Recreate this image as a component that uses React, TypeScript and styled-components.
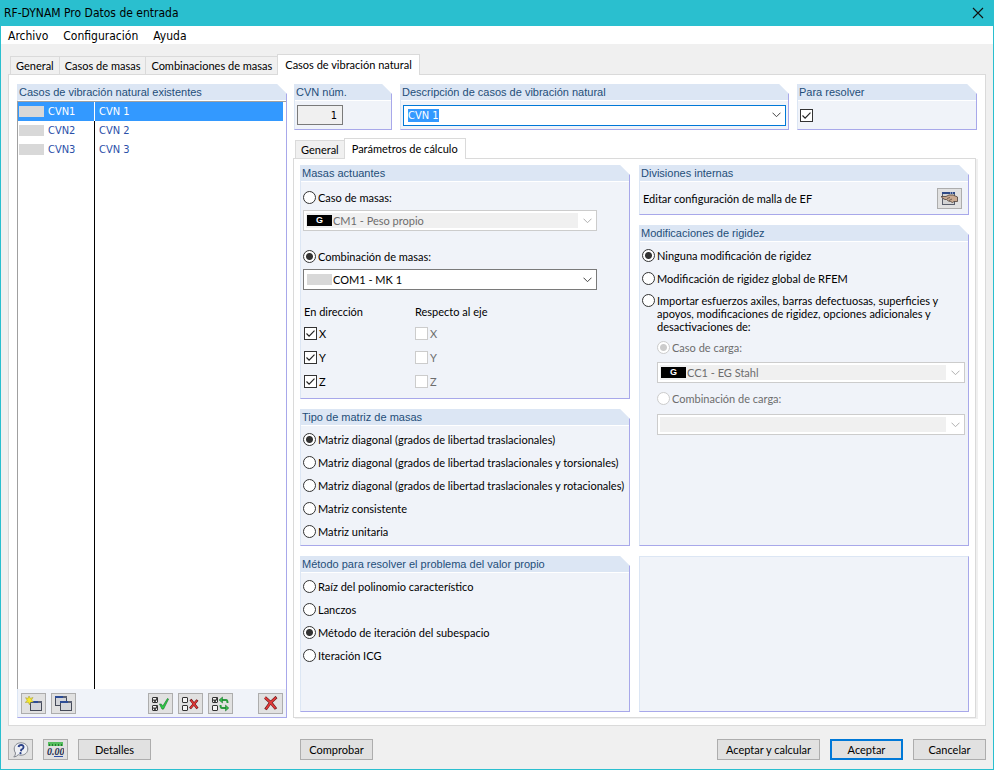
import React, { useEffect, useRef } from 'react';
import styled, { createGlobalStyle, css } from 'styled-components';

const ui = '"Lato", "Noto Sans", sans-serif';
const caption = '"DejaVu Sans Condensed", "DejaVu Sans", sans-serif';
const heading = '"Liberation Sans", Arial, sans-serif';

const c = {
  teal: '#2abfcf',
  face: '#f0f0f0',
  edge: '#dadada',
  panel: '#f0f3f9',
  head: '#dce6f4',
  headText: '#1f4e79',
  lilac: '#a8a8ea',
  select: '#3399ff',
  focus: '#0078d7',
  muted: '#6d6d6d',
  link: '#2b50a8',
};

const GlobalStyle = createGlobalStyle`
  *, *::before, *::after { box-sizing: border-box; }
  body { margin: 0; background: ${c.face}; color: #000; font: 11px/13px ${ui}; }
  button, input, select { font: inherit; color: inherit; margin: 0; }
  h1, h2 { margin: 0; font-weight: normal; }
  ::selection { background: ${c.select}; color: #fff; }
`;

const Window = styled.div`
  display: flex;
  flex-direction: column;
  min-height: 100vh;
  border: 1px solid ${c.teal};
  border-top: 0;
  background: ${c.face};
`;

const TitleBar = styled.header`
  display: flex;
  align-items: center;
  justify-content: space-between;
  height: 26px;
  padding: 0 7px 0 3px;
  background: ${c.teal};
`;

const Title = styled.h1`
  font: 12px/16px ${caption};
`;

const CloseButton = styled.button`
  display: flex;
  padding: 2px;
  border: 0;
  background: none;
`;

const MenuBar = styled.nav`
  display: flex;
  align-items: flex-end;
  gap: 15px;
  height: 18px;
  padding: 0 7px;
  background: #fff;
`;

const MenuItem = styled.button`
  padding: 0;
  border: 0;
  background: none;
  font: 12px/16px ${caption};
`;

const Content = styled.main`
  flex: 1;
  display: flex;
  flex-direction: column;
  padding: 10px 7px 0;
`;

const TabList = styled.div<{ $inset?: number }>`
  display: flex;
  align-items: flex-end;
  height: 20px;
  padding-left: ${(p) => p.$inset ?? 2}px;
`;

const Tab = styled.button<{ $active?: boolean }>`
  height: 18px;
  padding: 0 5px;
  border: 1px solid ${c.edge};
  border-right-width: 0;
  border-bottom-width: 0;
  background: ${c.face};
  white-space: nowrap;
  ${(p) =>
    p.$active &&
    css`
      z-index: 1;
      height: 21px;
      padding: 0 7px 2px;
      margin-bottom: -1px;
      border-right-width: 1px;
      background: #fff;
    `}
`;

const Page = styled.div`
  flex: 1;
  display: grid;
  grid-template-columns: 270px minmax(0, 1fr);
  gap: 6px;
  padding: 9px 8px 7px;
  border: 1px solid ${c.edge};
  background: #fff;
`;

const Group = styled.section<{ $grow?: boolean; $plain?: boolean }>`
  display: flex;
  flex-direction: column;
  min-width: 0;
  border: 1px solid ${c.lilac};
  border-left-color: ${c.head};
  border-top: ${(p) => (p.$plain ? `1px solid ${c.head}` : '0')};
  background: ${c.panel};
  clip-path: ${(p) =>
    p.$plain ? 'none' : 'polygon(0 0, calc(100% - 10px) 0, 100% 10px, 100% 100%, 0 100%)'};
  ${(p) => p.$grow && 'flex: 1;'}
`;

const GroupTitle = styled.h2`
  height: 17px;
  padding: 0 1px;
  border-bottom: 1px solid #fff;
  background: ${c.head};
  color: ${c.headText};
  font: 11px/16px ${heading};
  white-space: nowrap;
`;

const CaseList = styled.div`
  flex: 1;
  margin-left: -1px;
  padding-right: 3px;
  border-top: 1px solid #a0a0a0;
  border-left: 1px solid #a0a0a0;
  background: linear-gradient(#000, #000) 76px 0 / 1px 100% no-repeat #fff;
`;

const CaseTable = styled.table`
  width: 100%;
  border-spacing: 0;
  color: ${c.link};
`;

const CaseRow = styled.tr<{ $selected?: boolean }>`
  height: 19px;
  ${(p) => p.$selected && `background: ${c.select}; color: #fff;`}
`;

const CaseCode = styled.td<{ $selected?: boolean }>`
  width: 77px;
  padding: 0 1px;
  border-right: 1px solid ${(p) => (p.$selected ? '#fff' : '#000')};
`;

const CaseLabel = styled.span`
  display: flex;
  align-items: center;
  gap: 4px;
  font: 11px/13px ${caption};
`;

const CaseName = styled.td`
  padding: 0 4px;
  font: 11px/13px ${caption};
`;

const Swatch = styled.span<{ $dark?: boolean }>`
  flex: none;
  width: 25px;
  height: 11px;
  background: ${(p) => (p.$dark ? '#000' : '#d8d8d8')};
  color: #fff;
  font: bold 9px/11px ${heading};
  text-align: center;
`;

const ListTools = styled.div`
  display: flex;
  gap: 5px;
  padding: 4px 3px 3px;
`;

const Spacer = styled.span<{ $w?: number }>`
  flex: ${(p) => (p.$w ? `0 0 ${p.$w}px` : '1')};
`;

const IconButton = styled.button`
  display: flex;
  align-items: center;
  justify-content: center;
  width: 25px;
  height: 21px;
  padding: 0;
  border: 1px solid #adadad;
  background: #e1e1e1;
`;

const Details = styled.div`
  display: flex;
  flex-direction: column;
  min-width: 0;
`;

const CaseHeader = styled.div`
  display: grid;
  grid-template-columns: 98px minmax(0, 1fr) 180px;
  gap: 8px;
  margin: 0 0 8px 1px;
`;

const HeaderBody = styled.div`
  display: flex;
  align-items: center;
  height: 28px;
  padding: 0 2px;
`;

const NumberBox = styled.input`
  width: 46px;
  height: 20px;
  padding: 0 5px;
  border: 1px solid #7a7a7a;
  background: ${c.face};
  font: 11px/13px ${caption};
  text-align: right;
`;

const NameCombo = styled.div`
  flex: 1;
  display: flex;
  height: 21px;
  border: 1px solid ${c.focus};
  background: #fff;
`;

const NameInput = styled.input`
  flex: 1;
  min-width: 0;
  padding: 0 4px;
  border: 0;
  outline: 0;
  background: none;
  font: 11px/13px ${caption};
`;

const DropButton = styled.button`
  display: flex;
  align-items: center;
  justify-content: center;
  width: 17px;
  padding: 0;
  border: 0;
  background: none;
`;

const SubPage = styled.div`
  flex: 1;
  display: grid;
  grid-template-columns: minmax(0, 1fr) minmax(0, 1fr);
  gap: 9px;
  margin-right: 1px;
  padding: 6px 6px 5px;
  border: 1px solid ${c.edge};
  box-shadow: 2px 1px 0 ${c.face};
  background: #fff;
`;

const Column = styled.div`
  display: flex;
  flex-direction: column;
  gap: 10px;
  min-width: 0;
`;

const GroupBody = styled.div`
  display: flex;
  flex-direction: column;
  padding: 2px;
`;

const BottomSlot = styled.div`
  display: flex;
  flex: 1 0 156px;
`;

const FixedSlot = styled.div`
  display: flex;
  flex: 0 0 156px;
`;

const Option = styled.label<{ $disabled?: boolean; $top?: boolean; $tall?: number }>`
  display: flex;
  align-items: ${(p) => (p.$top ? 'flex-start' : 'center')};
  gap: 2px;
  min-height: ${(p) => p.$tall ?? 23}px;
  padding-top: ${(p) => (p.$top ? 4 : 0)}px;
  white-space: ${(p) => (p.$top ? 'normal' : 'nowrap')};
  ${(p) => p.$disabled && `color: ${c.muted};`}
`;

const Radio = styled.input.attrs({ type: 'radio' })`
  appearance: none;
  flex: none;
  width: 13px;
  height: 13px;
  border: 1px solid #333;
  border-radius: 50%;
  background: #fff;
  &:checked { background: radial-gradient(circle, #333 0 3px, #fff 4px); }
  &:disabled { border-color: #ccc; }
  &:disabled:checked { background: radial-gradient(circle, #ccc 0 3px, #fff 4px); }
`;

const CheckBox = styled.input.attrs({ type: 'checkbox' })`
  appearance: none;
  flex: none;
  width: 13px;
  height: 13px;
  border: 1px solid #333;
  background: #fff;
  &:disabled { border-color: #ccc; }
`;

const CheckFrame = styled.span`
  display: grid;
  > * { grid-area: 1 / 1; }
  > svg { pointer-events: none; }
`;

const SelectFrame = styled.div<{ $wide?: boolean; $disabled?: boolean }>`
  display: grid;
  grid-template-columns: 1fr 17px;
  align-items: center;
  height: 21px;
  margin: ${(p) => (p.$wide ? '2px 0' : '2px 30px 14px 0')};
  border: 1px solid ${(p) => (p.$disabled ? '#ccc' : '#7a7a7a')};
  background: #fff;
  color: ${(p) => (p.$disabled ? c.muted : '#000')};
  > * { grid-row: 1; }
  > svg { grid-column: 2; pointer-events: none; justify-self: center; }
  > span { grid-column: 1; margin-left: 3px; pointer-events: none; z-index: 1; }
`;

const Select = styled.select`
  appearance: none;
  grid-column: 1 / -1;
  width: 100%;
  height: 19px;
  padding: 0 17px 0 29px;
  border: 0;
  background: none;
  opacity: 1;
  &:disabled {
    background: linear-gradient(${c.face}, ${c.face}) 2px 2px / calc(100% - 20px) 15px no-repeat;
    color: ${c.muted};
  }
`;

const Axes = styled.div`
  display: grid;
  grid-template-columns: 111px 1fr;
  padding-left: 1px;
`;

const AxisTitle = styled.span`
  line-height: 16px;
  padding-bottom: 1px;
`;

const MasasBody = styled(GroupBody)`
  padding: 4px 2px 5px;
`;

const MeshRow = styled.div`
  display: flex;
  align-items: center;
  justify-content: space-between;
  height: 32px;
  padding: 0 6px 0 3px;
`;

const Nested = styled.div`
  padding: 2px 1px 0 15px;
`;

const Footer = styled.footer`
  display: flex;
  align-items: center;
  gap: 10px;
  padding: 13px 7px 9px;
`;

const PushButton = styled.button<{ $default?: boolean; $w?: number }>`
  min-width: ${(p) => p.$w ?? 73}px;
  height: 21px;
  padding: 0 7px;
  border: ${(p) => (p.$default ? `2px solid ${c.focus}` : '1px solid #adadad')};
  background: #e1e1e1;
  white-space: nowrap;
`;

const Chevron = ({ dim }: { dim?: boolean }) => (
  <svg width="9" height="6" viewBox="0 0 9 6" fill="none" stroke={dim ? '#b0b0b0' : '#444'}>
    <path d="M.5 .7l4 4 4-4" />
  </svg>
);

const Tick = () => (
  <svg width="13" height="13" viewBox="0 0 13 13" fill="none" stroke="#222" strokeWidth="1.2">
    <path d="M2.5 6.5l2.6 2.7 5.4-5.6" />
  </svg>
);

const MiniWindow = ({ x, y }: { x: number; y: number }) => (
  <g transform={`translate(${x} ${y})`}>
    <rect x=".5" y=".5" width="11" height="9" fill="#d3d5da" stroke="#454a58" />
    <rect x="0" y="0" width="8" height="2" fill="#2c4c96" />
    <rect x="8" y="0" width="4" height="2" fill="#5c6274" />
  </g>
);

const NewIcon = () => (
  <svg width="17" height="16" viewBox="0 0 17 16">
    <MiniWindow x={5} y={5} />
    <path
      d="M4 0l1.200 2.400L8 1.500 6.400 4 8.500 6 5.600 6 4.500 8.800 3.300 6.200.3 6.500 2.200 4.300.6 1.700l2.500.7z"
      fill="#f7ea2c"
      stroke="#a39722"
      strokeWidth=".5"
    />
  </svg>
);

const CopyIcon = () => (
  <svg width="17" height="16" viewBox="0 0 17 16">
    <MiniWindow x={0} y={0} />
    <MiniWindow x={5} y={5} />
  </svg>
);

const Boxes = ({ a, b }: { a?: boolean; b?: boolean }) => (
  <g fill="#f4f4f4" stroke="#333">
    <rect x=".5" y="1.5" width="5" height="5" rx=".5" />
    <rect x=".5" y="9.5" width="5" height="5" rx=".5" />
    {a && <path d="M1.5 3.5l1.5 2 2.5-4" fill="none" strokeWidth="1.3" />}
    {b && <path d="M1.5 11.5l1.5 2 2.5-4" fill="none" strokeWidth="1.3" />}
  </g>
);

const AllIcon = () => (
  <svg width="17" height="16" viewBox="0 0 17 16">
    <Boxes a b />
    <path d="M7.500 8l2 .2 1.200 2L15.500 2.500l1 .6-5 10h-1.500z" fill="#2fd048" stroke="#157a28" strokeWidth=".7" />
  </svg>
);

const NoneIcon = () => (
  <svg width="17" height="16" viewBox="0 0 17 16">
    <Boxes />
    <path d="M8.5 3.500l7 9M15.500 4l-7.500 8.500" stroke="#6c1515" strokeWidth="2.6" />
    <path d="M9 4.200l6 7.800M15 4.500l-6.500 7.500" stroke="#e03838" strokeWidth="1.4" />
  </svg>
);

const InvertIcon = () => (
  <svg width="17" height="16" viewBox="0 0 17 16">
    <Boxes a />
    <g fill="none" stroke="#2c9a40" strokeWidth="2">
      <path d="M8.5 4H14q1.500 0 1.500 3" />
      <path d="M15.500 12H10q-1.500 0-1.500-3" />
    </g>
    <path d="M10.500 1v6L7 4zM13.500 9v6l3.300-3z" fill="#35b84c" stroke="#166b27" strokeWidth=".5" />
  </svg>
);

const DeleteIcon = () => (
  <svg width="15" height="15" viewBox="0 0 15 15">
    <path d="M2 1.500Q8 6 13 13M13.500 1Q7 6 2.500 13.500" fill="none" stroke="#6a1c1c" strokeWidth="2.900" />
    <path d="M2 1.500Q8 6 12.500 12.500M13 1.500Q7 6 3 13" fill="none" stroke="#e23a3a" strokeWidth="1.700" />
  </svg>
);

const MeshIcon = () => (
  <svg width="17" height="15" viewBox="0 0 17 15">
    <rect x="1.5" y="1.5" width="12" height="12" fill="#d4d4d4" stroke="#5a5f6c" />
    <path d="M1 2h13" stroke="#2f4a86" strokeWidth="2" />
    <path d="M9 2h1M11 2h1" stroke="#dfe6f5" />
    <path
      d="M0 5.5h5L8 4h4l4.500 2v4.500H13l-1.500 1-2-1-2-.5-2-1.500H4L2 7.500z"
      fill="#c9a990"
      stroke="#4c4038"
      strokeWidth=".8"
    />
    <path d="M6 7.500l3-1M8 9.500l3-1.500" stroke="#4c4038" strokeWidth=".7" />
  </svg>
);

const HelpIcon = () => (
  <svg width="17" height="16" viewBox="0 0 17 16">
    <path
      d="M8.500 1a6.500 6 0 1 1-3 0M5.500 13Q4.500 14.800 2 15q1.500-1.500 1.200-3.500"
      fill="none"
      stroke="none"
    />
    <path
      d="M9 .8C13 .8 15.800 3.500 15.800 7S13 13.200 9 13.200q-1.500 0-2.800-.5Q4.500 14.800 1.800 15q1.800-1.700 1.700-4Q2.200 9.200 2.200 7C2.200 3.500 5 .8 9 .8z"
      fill="#eef0f4"
      stroke="#82868e"
    />
    <path d="M6.500 5q.5-2 2.800-2t2.200 2.200Q11.400 7 9.400 7.600L8.900 9.200" fill="none" stroke="#2b4188" strokeWidth="1.900" />
    <circle cx="8.500" cy="11.200" r="1.100" fill="#2b4188" />
  </svg>
);

const UnitsIcon = () => (
  <svg width="17" height="17" viewBox="0 0 17 17">
    <rect x="1" y="1" width="15" height="4" fill="#55bd5e" />
    <path d="M2.5 3v2M5.5 3v2M8.5 3v2M11.5 3v2M14.5 3v2" stroke="#237a2d" />
    <text x="0" y="14" fontFamily="Liberation Serif, serif" fontStyle="italic" fontWeight="bold" fontSize="10" fill="#26304f">
      0.00
    </text>
    <path d="M7 15.5h9" stroke="#2e4fa5" />
  </svg>
);

const CloseIcon = () => (
  <svg width="12" height="12" viewBox="0 0 12 12" stroke="#111" strokeWidth="1.1">
    <path d="M1 1l10 10M11 1L1 11" />
  </svg>
);

interface ComboProps {
  label: string;
  value: string;
  tag?: string;
  swatch?: boolean;
  disabled?: boolean;
  wide?: boolean;
}

function Combo({ label, value, tag, swatch, disabled, wide }: ComboProps) {
  return (
    <SelectFrame $wide={wide} $disabled={disabled}>
      <Select aria-label={label} disabled={disabled} defaultValue={value}>
        <option>{value}</option>
      </Select>
      {swatch && <Swatch $dark={!!tag}>{tag}</Swatch>}
      <Chevron dim={disabled} />
    </SelectFrame>
  );
}

function Check({ label, checked, disabled }: { label?: string; checked?: boolean; disabled?: boolean }) {
  return (
    <Option $disabled={disabled} $tall={24}>
      <CheckFrame>
        <CheckBox defaultChecked={checked} disabled={disabled} aria-label={label ?? 'Para resolver'} />
        {checked && <Tick />}
      </CheckFrame>
      {label}
    </Option>
  );
}

function RadioList({ name, items, selected }: { name: string; items: string[]; selected: number }) {
  return (
    <GroupBody>
      {items.map((item, i) => (
        <Option key={item}>
          <Radio name={name} defaultChecked={i === selected} />
          {item}
        </Option>
      ))}
    </GroupBody>
  );
}

const cases = [1, 2, 3];

export default function App() {
  const nameRef = useRef<HTMLInputElement>(null);
  useEffect(() => {
    nameRef.current?.focus();
    nameRef.current?.select();
  }, []);

  return (
    <Window>
      <GlobalStyle />
      <TitleBar>
        <Title>RF-DYNAM Pro Datos de entrada</Title>
        <CloseButton aria-label="Cerrar"><CloseIcon /></CloseButton>
      </TitleBar>
      <MenuBar>
        <MenuItem>Archivo</MenuItem>
        <MenuItem>Configuración</MenuItem>
        <MenuItem>Ayuda</MenuItem>
      </MenuBar>
      <Content>
        <TabList role="tablist">
          <Tab role="tab">General</Tab>
          <Tab role="tab">Casos de masas</Tab>
          <Tab role="tab">Combinaciones de masas</Tab>
          <Tab role="tab" aria-selected $active>Casos de vibración natural</Tab>
        </TabList>
        <Page>
          <Group>
            <GroupTitle>Casos de vibración natural existentes</GroupTitle>
            <CaseList>
              <CaseTable>
                <tbody>
                  {cases.map((n) => (
                    <CaseRow key={n} $selected={n === 1}>
                      <CaseCode $selected={n === 1}>
                        <CaseLabel><Swatch />CVN{n}</CaseLabel>
                      </CaseCode>
                      <CaseName>CVN {n}</CaseName>
                    </CaseRow>
                  ))}
                </tbody>
              </CaseTable>
            </CaseList>
            <ListTools>
              <IconButton aria-label="Nuevo"><NewIcon /></IconButton>
              <IconButton aria-label="Copiar"><CopyIcon /></IconButton>
              <Spacer />
              <IconButton aria-label="Seleccionar todo"><AllIcon /></IconButton>
              <IconButton aria-label="Deseleccionar todo"><NoneIcon /></IconButton>
              <IconButton aria-label="Invertir selección"><InvertIcon /></IconButton>
              <Spacer $w={15} />
              <IconButton aria-label="Eliminar"><DeleteIcon /></IconButton>
            </ListTools>
          </Group>

          <Details>
            <CaseHeader>
              <Group>
                <GroupTitle as="label" htmlFor="cvn-number">CVN núm.</GroupTitle>
                <HeaderBody><NumberBox id="cvn-number" readOnly value="1" /></HeaderBody>
              </Group>
              <Group>
                <GroupTitle as="label" htmlFor="cvn-name">Descripción de casos de vibración natural</GroupTitle>
                <HeaderBody>
                  <NameCombo>
                    <NameInput id="cvn-name" ref={nameRef} defaultValue="CVN 1" />
                    <DropButton aria-label="Abrir lista" tabIndex={-1}><Chevron /></DropButton>
                  </NameCombo>
                </HeaderBody>
              </Group>
              <Group>
                <GroupTitle>Para resolver</GroupTitle>
                <HeaderBody><Check checked /></HeaderBody>
              </Group>
            </CaseHeader>

            <TabList role="tablist">
              <Tab role="tab">General</Tab>
              <Tab role="tab" aria-selected $active>Parámetros de cálculo</Tab>
            </TabList>
            <SubPage>
              <Column>
                <Group>
                  <GroupTitle>Masas actuantes</GroupTitle>
                  <MasasBody>
                    <Option $tall={22}><Radio name="masas" />Caso de masas:</Option>
                    <Combo label="Caso de masas" value="CM1 - Peso propio" tag="G" swatch disabled />
                    <Option $tall={22}><Radio name="masas" defaultChecked />Combinación de masas:</Option>
                    <Combo label="Combinación de masas" value="COM1 - MK 1" swatch />
                    <Axes>
                      <AxisTitle>En dirección</AxisTitle>
                      <AxisTitle>Respecto al eje</AxisTitle>
                      {['X', 'Y', 'Z'].map((axis) => (
                        <React.Fragment key={axis}>
                          <Check label={axis} checked />
                          <Check label={axis} disabled />
                        </React.Fragment>
                      ))}
                    </Axes>
                  </MasasBody>
                </Group>
                <Group>
                  <GroupTitle>Tipo de matriz de masas</GroupTitle>
                  <RadioList
                    name="matriz"
                    selected={0}
                    items={[
                      'Matriz diagonal (grados de libertad traslacionales)',
                      'Matriz diagonal (grados de libertad traslacionales y torsionales)',
                      'Matriz diagonal (grados de libertad traslacionales y rotacionales)',
                      'Matriz consistente',
                      'Matriz unitaria',
                    ]}
                  />
                </Group>
                <BottomSlot>
                  <Group $grow>
                    <GroupTitle>Método para resolver el problema del valor propio</GroupTitle>
                    <RadioList
                      name="metodo"
                      selected={2}
                      items={[
                        'Raíz del polinomio característico',
                        'Lanczos',
                        'Método de iteración del subespacio',
                        'Iteración ICG',
                      ]}
                    />
                  </Group>
                </BottomSlot>
              </Column>
              <Column>
                <Group>
                  <GroupTitle>Divisiones internas</GroupTitle>
                  <MeshRow>
                    <span>Editar configuración de malla de EF</span>
                    <IconButton aria-label="Editar malla de EF"><MeshIcon /></IconButton>
                  </MeshRow>
                </Group>
                <Group $grow>
                  <GroupTitle>Modificaciones de rigidez</GroupTitle>
                  <GroupBody>
                    <Option><Radio name="rigidez" defaultChecked />Ninguna modificación de rigidez</Option>
                    <Option><Radio name="rigidez" />Modificación de rigidez global de RFEM</Option>
                    <Option $top>
                      <Radio name="rigidez" />
                      <span>
                        Importar esfuerzos axiles, barras defectuosas, superficies y<br />
                        apoyos, modificaciones de rigidez, opciones adicionales y<br />
                        desactivaciones de:
                      </span>
                    </Option>
                    <Nested>
                      <Option $disabled $tall={25}><Radio name="carga" defaultChecked disabled />Caso de carga:</Option>
                      <Combo label="Caso de carga" value="CC1 - EG Stahl" tag="G" swatch disabled wide />
                      <Option $disabled $tall={27}><Radio name="carga" disabled />Combinación de carga:</Option>
                      <Combo label="Combinación de carga" value="" disabled wide />
                    </Nested>
                  </GroupBody>
                </Group>
                <FixedSlot>
                  <Group $grow $plain />
                </FixedSlot>
              </Column>
            </SubPage>
          </Details>
        </Page>
      </Content>
      <Footer>
        <IconButton aria-label="Ayuda"><HelpIcon /></IconButton>
        <IconButton aria-label="Unidades"><UnitsIcon /></IconButton>
        <PushButton>Detalles</PushButton>
        <Spacer $w={129} />
        <PushButton>Comprobar</PushButton>
        <Spacer />
        <PushButton $w={103}>Aceptar y calcular</PushButton>
        <PushButton $default>Aceptar</PushButton>
        <PushButton>Cancelar</PushButton>
      </Footer>
    </Window>
  );
}
